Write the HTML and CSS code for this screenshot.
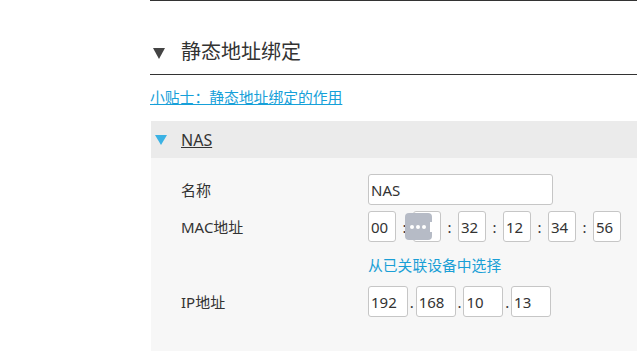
FILE: index.html
```html
<!DOCTYPE html>
<html lang="zh-CN">

<head>
    <meta charset="UTF-8">
    <meta name="viewport" content="width=device-width, initial-scale=1.0">
    <title>静态地址绑定</title>
    <link rel="stylesheet" href="styles.css">
</head>

<body>
    <div class="page">
        <div class="section-head">
            <span class="caret"></span>
            <h2>静态地址绑定</h2>
        </div>
        <a class="tip" href="#">小贴士：静态地址绑定的作用</a>

        <div class="card">
            <div class="card-head">
                <span class="caret-blue"></span>
                <a class="card-title" href="#">NAS</a>
            </div>
            <div class="card-body">
                <div class="row">
                    <label>名称</label>
                    <input class="text-input" type="text" value="NAS">
                </div>
                <div class="row">
                    <label>MAC地址</label>
                    <div class="fields">
                        <input class="mac" type="text" value="00"><span class="sep mac-sep">:</span>
                        <span class="autofill-wrap">
                            <input class="mac" type="text" value="">
                            <span class="autofill"><i></i><i></i><i></i><b></b></span>
                        </span><span class="sep mac-sep">:</span>
                        <input class="mac" type="text" value="32"><span class="sep mac-sep">:</span>
                        <input class="mac" type="text" value="12"><span class="sep mac-sep">:</span>
                        <input class="mac" type="text" value="34"><span class="sep mac-sep">:</span>
                        <input class="mac" type="text" value="56">
                    </div>
                </div>
                <div class="row pick-row">
                    <label></label>
                    <a class="pick" href="#">从已关联设备中选择</a>
                </div>
                <div class="row ip-row">
                    <label>IP地址</label>
                    <div class="fields">
                        <input class="ip" type="text" value="192"><span class="sep ip-sep">.</span>
                        <input class="ip" type="text" value="168"><span class="sep ip-sep">.</span>
                        <input class="ip" type="text" value="10"><span class="sep ip-sep">.</span>
                        <input class="ip" type="text" value="13">
                    </div>
                </div>
            </div>
        </div>
    </div>
</body>

</html>
```

FILE: styles.css
```css
body {
    margin: 0;
    background: #fff;
    color: #333;
    font-family: "Noto Sans", "Noto Sans CJK SC", sans-serif;
    font-size: 15px;
}

.page {
    margin-left: 150px;
    height: 351px;
    border-top: 1px solid #333;
    overflow: hidden;
}

.section-head {
    display: flex;
    align-items: center;
    padding: 37px 0 8px 3px;
    border-bottom: 1px solid #333;
}

.section-head h2 {
    margin: 0;
    font-size: 20px;
    font-weight: normal;
    line-height: 28px;
    color: #333;
}

.caret {
    width: 0;
    height: 0;
    border-left: 6px solid transparent;
    border-right: 6px solid transparent;
    border-top: 11px solid #444;
    margin: 2px 16px 0 0;
}

.tip {
    display: block;
    width: fit-content;
    margin: 12px 0 14px;
    line-height: 20px;
    font-size: 14.8px;
    color: #16a0d9;
}

.card {
    margin-left: 1px;
}

.card-head {
    display: flex;
    align-items: center;
    height: 37px;
    padding-left: 4px;
    background: #ebebeb;
}

.caret-blue {
    width: 0;
    height: 0;
    border-left: 6px solid transparent;
    border-right: 6px solid transparent;
    border-top: 10px solid #3bb2e4;
    margin-right: 14px;
}

.card-title {
    color: #333;
    font-size: 16px;
}

.card-body {
    background: #f7f7f7;
    padding: 16px 0 60px;
}

.row {
    display: flex;
    align-items: center;
    padding-left: 30px;
    margin-bottom: 6px;
}

.row label {
    width: 187px;
    flex-shrink: 0;
}

.pick-row {
    margin: 13px 0 11px;
}

.pick {
    line-height: 20px;
    color: #1a9fd6;
    text-decoration: none;
    font-size: 14.8px;
}

.fields {
    display: flex;
    align-items: center;
}

input {
    box-sizing: border-box;
    height: 31px;
    margin: 0;
    padding: 0 2px;
    border: 1px solid #c6c6c6;
    border-radius: 3px;
    background: #fff;
    color: #333;
    font-family: inherit;
    font-size: 15px;
}

.text-input {
    width: 185px;
}

.mac {
    width: 28px;
}

.ip {
    width: 40px;
}

.sep {
    text-align: center;
    font-size: 15px;
}

.mac-sep {
    width: 17px;
}

.ip-sep {
    width: 7.7px;
}

.autofill-wrap {
    position: relative;
    display: flex;
}

.autofill {
    position: absolute;
    left: -8px;
    top: 2px;
    width: 27px;
    height: 27px;
    border-radius: 4px;
    background: #b6bbc6;
    display: flex;
    align-items: center;
    padding-left: 5px;
    box-sizing: border-box;
    gap: 2px;
}

.autofill i {
    width: 4px;
    height: 4px;
    border-radius: 50%;
    background: #fff;
}

.autofill b {
    width: 2px;
    height: 10px;
    margin-left: 2px;
    background: #fff;
}
```
